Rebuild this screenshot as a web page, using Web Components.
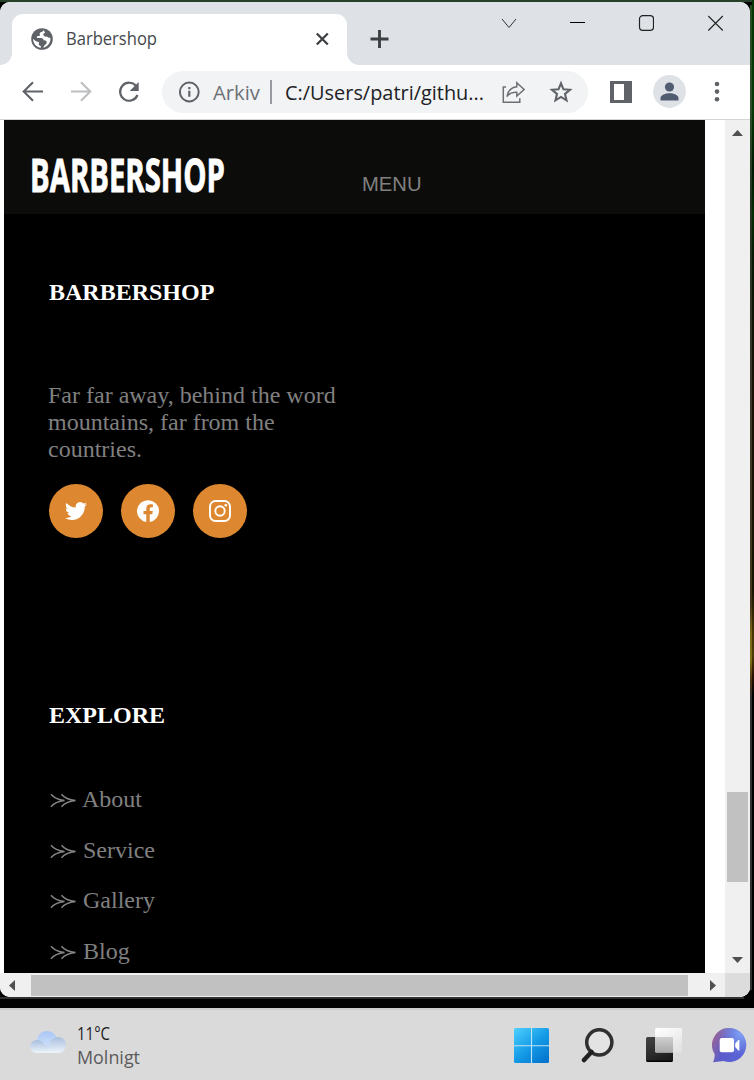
<!DOCTYPE html>
<html lang="sv"><head><meta charset="utf-8"><title>Barbershop</title>
<style>
html,body{margin:0;width:754px;height:1080px;overflow:hidden}
body{background:#000;font-family:"Open Sans","Noto Sans",sans-serif}
</style></head><body>
<desktop-screen></desktop-screen>
<script>
const define=(name,html,init)=>{
  const t=document.createElement('template');t.innerHTML=html;
  customElements.define(name,class extends HTMLElement{
    constructor(){super();this.attachShadow({mode:'open'}).append(t.content.cloneNode(true));}
    connectedCallback(){if(init)init(this);}
  });
};

// Single line of text squeezed or stretched to the width given in "w"
define('fit-text',`<style>:host{display:block;white-space:nowrap;overflow:visible;flex:none}
span{display:inline-block;transform-origin:0 50%;vertical-align:top}</style><span><slot></slot></span>`,el=>{
  const w=+el.getAttribute('w'),s=el.shadowRoot.querySelector('span');
  el.style.width=w+'px';
  s.style.transform='scaleX('+(w/s.getBoundingClientRect().width)+')';
});

define('browser-tabs',`<style>
:host{display:flex;height:63px;background:#dee1e6;box-sizing:border-box;padding-top:12px;align-items:flex-start}
.tab{width:335px;height:51px;margin-left:12px;background:#fff;border-radius:11px 11px 0 0;display:flex;align-items:center;box-sizing:border-box;padding:0 18px 2px 18px;position:relative}
.tab::before,.tab::after{content:"";position:absolute;bottom:0;width:12px;height:12px}
.tab::before{left:-12px;background:radial-gradient(circle at 0 0,transparent 11.5px,#fff 12.2px)}
.tab::after{right:-12px;background:radial-gradient(circle at 100% 0,transparent 11.5px,#fff 12.2px)}
fit-text{font-size:18px;line-height:24px;color:#45494d;margin:-2px auto 0 12px}
svg{display:block;flex:none}
.plus{margin:15px 0 0 22px}
.win{display:flex;margin-left:auto;padding:0 26px 0 0;gap:52px}
</style>
<div class="tab">
<svg width="24" height="24" viewBox="0 0 24 24"><circle cx="12" cy="12" r="10.8" fill="#5f6368"/><path d="M13.7 3.2c-.7.4-1.5.8-1.3 1.8-1 0-2.500.3-2.700 1.500-.2 1 .6 1.700 0 2.300-.7.500-1.700.1-2.600.500-.7.5-.3 1.700.6 1.800h3.500c1.600 0 2.400 1 2.500 2.300 1.600-.2 3.100.5 3 2-.1 1.500-1.600 2.200-2.600 3.300l-.8 2c4.200-1 7.100-4.600 7.100-8.700l-.3-1.600c-1.300.5-2.600.3-3.200-.8-1.400.3-3.100-.2-3.500-1.600-.3-1.200.7-2 1.800-2.200zM3.100 11.700c0 4.900 3.300 8.500 7.700 9.100v-1.900c-1.500-.2-2.200-1.100-2-2.700l.2-1.300c-2.500-.2-4.400-1.300-5.900-3.200z" fill="#fff"/></svg>
<fit-text w="91">Barbershop</fit-text>
<svg width="14" height="14" viewBox="0 0 14 14"><path d="M1.800 1.500l11 11M12.800 1.500l-11 11" stroke="#3c4043" stroke-width="2.300"/></svg>
</div>
<svg class="plus" width="20" height="20" viewBox="0 0 20 20"><path d="M10.500 1v18M1.500 10h18" stroke="#3c4043" stroke-width="2.900"/></svg>
<div class="win">
<svg width="18" height="18" viewBox="0 0 18 18"><path d="M2 5l7 8.500L16 5" fill="none" stroke="#333" stroke-width="1"/></svg>
<svg width="15" height="18" viewBox="0 0 15 18" style="margin-right:1px"><path d="M0 8.500h15" stroke="#000"/></svg>
<svg width="16" height="18" viewBox="0 0 16 18"><rect x="1.500" y="1.600" width="14" height="14.800" rx="3.300" fill="none" stroke="#222" stroke-width="1.200"/></svg>
<svg width="18" height="18" viewBox="0 0 18 18"><path d="M2.300 2l14.500 14.500M16.800 2L2.300 16.500" stroke="#222" stroke-width="1.100"/></svg>
</div>`);

define('browser-toolbar',`<style>
:host{display:flex;height:55px;background:#fff;box-sizing:border-box;border-bottom:1px solid #d3d5d8;align-items:center;padding-left:22px}
svg{display:block;flex:none}
.omni{width:426px;height:42px;border-radius:21px;background:#f1f3f4;display:flex;align-items:center;box-sizing:border-box;padding-left:16px;margin-left:22px;flex:none}
fit-text{font-size:20.500px;line-height:28px;color:#202124;margin-top:0}
.dim{color:#6d7176;margin-left:12px}
i{width:2px;height:24px;background:#96999d;margin:0 13px 0 11px;flex:none}
</style>
<svg width="22" height="22" viewBox="0 0 22 22"><path d="M21 10.500H2M11 1.200L1.700 10.500l9.300 9.300" fill="none" stroke="#5f6368" stroke-width="2.100"/></svg>
<svg style="margin-left:26px" width="22" height="22" viewBox="0 0 22 22"><path d="M1 10.500h19M11 1.200l9.300 9.300-9.300 9.300" fill="none" stroke="#bcbec0" stroke-width="2.100"/></svg>
<svg style="margin-left:26px" width="22" height="22" viewBox="0 0 22 22"><path d="M18.300 5.300A9 9 0 1 0 19.500 14" fill="none" stroke="#5f6368" stroke-width="2.200"/><path d="M20.700 1v9h-9z" fill="#5f6368"/></svg>
<div class="omni">
<svg width="22" height="22" viewBox="0 0 22 22"><circle cx="11.300" cy="11" r="9.400" fill="none" stroke="#5f6368" stroke-width="2"/><path d="M11.300 6v2.200M11.300 9.800v6" stroke="#5f6368" stroke-width="2.200"/></svg>
<fit-text class="dim" w="47" style="margin-left:13px;margin-right:-1px">Arkiv</fit-text><i></i>
<fit-text w="199">C:/Users/patri/githu...</fit-text>
<svg style="margin-left:17px" width="25" height="24" viewBox="0 0 25 24"><path d="M5 7H2.300v15.300h16.500v-4" fill="none" stroke="#6c7074" stroke-width="1.500"/><path d="M15.800 2.800l7.300 6.700-7.300 6.500v-3.800c-4.500-.2-7.500 1-9.800 4.300.8-5.500 4.200-9 9.800-9.700z" fill="none" stroke="#6c7074" stroke-width="1.500"/></svg>
<svg style="margin-left:23px" width="24" height="24" viewBox="0 0 24 24"><path d="M12 3.300l2.500 6 6.500.5-5 4.200 1.500 6.300-5.500-3.400-5.500 3.400L8 14 3 9.800l6.500-.5z" fill="none" stroke="#5f6368" stroke-width="2.100"/></svg>
</div>
<svg style="margin-left:22px" width="22" height="22" viewBox="0 0 22 22"><path d="M0 0h22v22H0zM4 3v16h10V3z" fill="#5f6368" fill-rule="evenodd"/></svg>
<svg style="margin-left:20px" width="34" height="34" viewBox="0 0 34 34"><circle cx="17.500" cy="16.500" r="16.400" fill="#dee1e6"/><circle cx="17.500" cy="12" r="4.600" fill="#525c70"/><path d="M8.500 25.500v-2.500c0-3 5-4.800 9-4.800s9 1.800 9 4.800v2.500z" fill="#525c70"/></svg>
<svg style="margin-left:28px" width="6" height="22" viewBox="0 0 6 22"><g fill="#5f6368"><circle cx="3" cy="3" r="2.300"/><circle cx="3" cy="10.600" r="2.300"/><circle cx="3" cy="18.200" r="2.300"/></g></svg>`);

define('site-header',`<style>
:host{display:flex;height:94px;background:#0c0c0a;align-items:flex-start}
.logo{font:700 47px/50px "Open Sans",sans-serif;-webkit-text-stroke:.9px #fff;color:#fff;margin:29px 0 0 26px}
.menu{font:21px/24px "Liberation Sans",Arial,sans-serif;color:#808080;margin:52px 0 0 136.500px}
</style><fit-text class="logo" w="195">BARBERSHOP</fit-text><fit-text class="menu" w="59.5">MENU</fit-text>`);

define('social-button',`<style>:host{display:flex;width:54px;height:54px;border-radius:50%;background:#dd8830;align-items:center;justify-content:center;color:#fff}</style><slot></slot>`);

define('explore-link',`<style>:host{display:flex;height:27px;line-height:27px;align-items:center}
svg{display:block;width:27px;height:15px;margin:2px 6px 0 1px}:host(:first-child) svg{margin-right:5px}</style>
<svg viewBox="0 0 27 15"><path d="M1 1.200C4 5 8.500 6.800 14.500 7.500 8.500 8.200 4 10 1 13.800M11.500 1.200C14.500 5 19 6.800 25.500 7.500 19 8.200 14.500 10 11.500 13.800" fill="none" stroke="#858585" stroke-width="1.400"/></svg><slot></slot>`);

define('site-page',`<style>
:host{display:block;background:#000;height:853px;overflow:hidden;width:701px;font-family:"Liberation Serif","Times New Roman",serif;font-size:24px;color:#808080}
h2{font-size:24px;line-height:27px;color:#fff;margin:0 0 0 45px}
p{margin:76px 0 0 44px;width:300px;line-height:27px}
.social{display:flex;gap:18px;margin:21px 0 0 45px}
nav{display:grid;row-gap:23.700px;margin:57px 0 0 45px}
svg{display:block}
</style>
<site-header></site-header>
<h2 style="margin-top:65px">BARBERSHOP</h2>
<p>Far far away, behind the word mountains, far from the countries.</p>
<div class="social">
<social-button><svg width="22" height="22" viewBox="0 0 24 24" fill="#fff"><path d="M23.950 4.570a10 10 0 0 1-2.820.78 4.960 4.960 0 0 0 2.160-2.730c-.95.560-2 .960-3.130 1.190a4.920 4.920 0 0 0-8.380 4.480C7.690 8.100 4.070 6.130 1.640 3.160a4.820 4.820 0 0 0-.67 2.480c0 1.710.87 3.210 2.190 4.100a4.900 4.900 0 0 1-2.230-.62v.06a4.920 4.920 0 0 0 3.950 4.830 4.860 4.860 0 0 1-2.210.08 4.930 4.930 0 0 0 4.600 3.420A9.870 9.870 0 0 1 0 19.540a13.990 13.990 0 0 0 7.550 2.210c9.050 0 14-7.500 14-13.980 0-.21 0-.42-.02-.63a9.940 9.940 0 0 0 2.460-2.550z"/></svg></social-button>
<social-button><svg width="22" height="22" viewBox="0 0 16 16" fill="#fff"><path d="M16 8.050A8 8 0 1 0 6.750 16v-5.620H4.720V8.050h2.030V6.280c0-2.020 1.200-3.130 3.020-3.130.88 0 1.790.160 1.790.160v1.980h-1c-1 0-1.310.620-1.310 1.260v1.500h2.220l-.36 2.330H9.250V16A8 8 0 0 0 16 8.050z"/></svg></social-button>
<social-button><svg width="22" height="22" viewBox="0 0 22 22" fill="none" stroke="#fff" stroke-width="1.900"><rect x="1" y="1" width="20" height="20" rx="5.500"/><circle cx="11" cy="11" r="4.700"/><circle cx="16.800" cy="5.200" r="1.300" fill="#fff" stroke="none"/></svg></social-button>
</div>
<h2 style="margin-top:164px">EXPLORE</h2>
<nav><explore-link>About</explore-link><explore-link>Service</explore-link><explore-link>Gallery</explore-link><explore-link>Blog</explore-link></nav>`);

define('scroll-v',`<style>:host{display:flex;flex-direction:column;align-items:center;background:#f0f0f0;padding-top:10px;box-sizing:border-box}
svg{display:block}i{display:block;width:21px;height:90px;background:#c1c1c1;margin:656px 0 75px}</style>
<svg width="11" height="6"><path d="M0 6l5.500-6L11 6z" fill="#505050"/></svg><i></i>
<svg width="11" height="6"><path d="M0 0l5.500 6L11 0z" fill="#505050"/></svg>`);

define('scroll-h',`<style>:host{display:flex;height:24px;background:#f0f0f0;align-items:center}
svg{display:block}i{display:block;width:657px;height:21px;background:#c1c1c1;margin:0 22px 0 16px}b{display:block;width:25px;height:24px;background:#dcdcdc;margin-left:auto}</style>
<svg width="6" height="11" style="margin-left:9px"><path d="M6 0L0 5.500 6 11z" fill="#505050"/></svg><i></i>
<svg width="6" height="11"><path d="M0 0l6 5.500L0 11z" fill="#505050"/></svg><b></b>`);

define('browser-window',`<style>:host{display:block;width:750px;height:995px;border-radius:10px;overflow:hidden;background:#fff}
.view{display:grid;grid-template-columns:701px 25px;justify-content:space-between;height:853px;padding-left:4px}</style>
<browser-tabs></browser-tabs><browser-toolbar></browser-toolbar>
<div class="view"><site-page></site-page><scroll-v></scroll-v></div><scroll-h></scroll-h>`);

define('task-bar',`<style>:host{display:flex;height:72px;background:#dadada;border-top:2px solid #cbcbcb;box-sizing:border-box;padding-left:29px;align-items:flex-start;overflow:hidden}
svg{display:block;flex:none}.w{margin:11px 0 0 10px;font-size:17.500px;line-height:24px;color:#1c1c1c;width:64px}.w fit-text+fit-text{color:#5b5b5b}
.apps{display:flex;margin:18px 0 0 373px;flex:none}</style>
<svg style="margin-top:20px" width="38" height="25" viewBox="0 0 38 25"><defs><linearGradient id="a" x2="0" y2="1"><stop stop-color="#a9c6f5"/><stop offset="1" stop-color="#d9e8fa"/></linearGradient><linearGradient id="b" x2="0" y2="1"><stop stop-color="#a9bedd"/><stop offset="1" stop-color="#edf5fb"/></linearGradient></defs><circle cx="18" cy="11.500" r="10.500" fill="url(#a)"/><path d="M8 10c4 0 6 2 8 5l6 2v6H7.500A6.500 6.500 0 0 1 8 10z" fill="url(#b)"/><path d="M12 23c5-3 9-4 9-8a8 8 0 1 1 8 8z" fill="url(#b)"/></svg>
<div class="w"><fit-text w="33">11°C</fit-text><fit-text w="63">Molnigt</fit-text></div>
<div class="apps">
<svg width="35" height="35" viewBox="0 0 35 35"><defs><linearGradient id="c" gradientUnits="userSpaceOnUse" x1="0" y1="0" x2="30" y2="35"><stop stop-color="#4fd0ff"/><stop offset=".55" stop-color="#149be6"/><stop offset="1" stop-color="#0474ce"/></linearGradient></defs><rect width="35" height="35" rx="1.500" fill="url(#c)"/><path d="M17.500 0v35M0 17.700h35" stroke="#bfe2f6" stroke-width="1.100"/></svg>
<svg style="margin-left:32px" width="33" height="35" viewBox="0 0 33 35"><circle cx="18.300" cy="14.300" r="12.600" fill="#e3e3e3" stroke="#303030" stroke-width="3.500"/><path d="M10.500 24L3 32" stroke="#202020" stroke-width="4.500" stroke-linecap="round"/></svg>
<svg style="margin-left:32px" width="36" height="35" viewBox="0 0 36 35"><defs><linearGradient id="d" x2=".5" y2="1"><stop stop-color="#454545"/><stop offset="1" stop-color="#1c1c1c"/></linearGradient><linearGradient id="e" x2=".5" y2="1"><stop stop-color="#fff"/><stop offset="1" stop-color="#e4e4e4"/></linearGradient><linearGradient id="g" x2="0" y2="1"><stop stop-color="#cfcfcf"/><stop offset="1" stop-color="#a9a9a9"/></linearGradient></defs><rect y="9" width="27" height="25" rx="1.500" fill="url(#d)"/><path d="M1 33.300h25" stroke="#000" stroke-width="1.300"/><rect x="9" width="27" height="24.500" rx="1.500" fill="url(#e)"/><path d="M9 9h18v15.500H10L9 23.500z" fill="url(#g)"/></svg>
<svg style="margin-left:30px" width="35" height="35" viewBox="0 0 35 35"><defs><linearGradient id="f" x1=".1" y1=".25" x2=".75" y2=".6"><stop stop-color="#92659f"/><stop offset=".55" stop-color="#5b5cc8"/><stop offset="1" stop-color="#5b62d4"/></linearGradient><radialGradient id="h" cx=".85" cy=".15" r=".65"><stop stop-color="#7fa2f5"/><stop offset="1" stop-color="#7fa2f5" stop-opacity="0"/></radialGradient></defs><path d="M17.500 0a17 17 0 1 1-6 33L1 34.300c1.300-3.500 2-6 1.500-8.500A17 17 0 0 1 17.500 0z" fill="url(#f)"/><path d="M17.500 0a17 17 0 1 1-6 33L1 34.300c1.300-3.500 2-6 1.500-8.500A17 17 0 0 1 17.500 0z" fill="url(#h)"/><rect x="7.700" y="10" width="14.300" height="14.300" rx="2" fill="#fff"/><path d="M23.200 15.500l3.200-3.500h1v10.500h-1l-3.200-3.500z" fill="#fff"/></svg>
</div>`);

define('desktop-screen',`<style>:host{display:flex;flex-direction:column;width:754px;height:1080px;justify-content:space-between;box-sizing:border-box;overflow:hidden;
background:linear-gradient(#26402a,#26402a) 0 0/752px 2px no-repeat,linear-gradient(#303030,#303030) 0 997px/744px 2px no-repeat,linear-gradient(#244b20,#2f4b2a 100px,#23321f 200px,#3c3628 400px,#44361c 600px,#79631a 626px,#806e17 655px,#513314 675px,#303030 695px,#303030 990px) 750px 5px/2px 985px no-repeat,linear-gradient(#063606,#063706 110px,#011802 170px,#042e04 215px,#081705 260px,#1a1004 400px,#171402 590px,#443505 630px,#4d3e06 655px,#2d1203 675px,#000 695px) 752px 0/2px 997px no-repeat,#000}
browser-window{margin-top:2px}</style>
<browser-window></browser-window><task-bar></task-bar>`);
</script></body></html>
